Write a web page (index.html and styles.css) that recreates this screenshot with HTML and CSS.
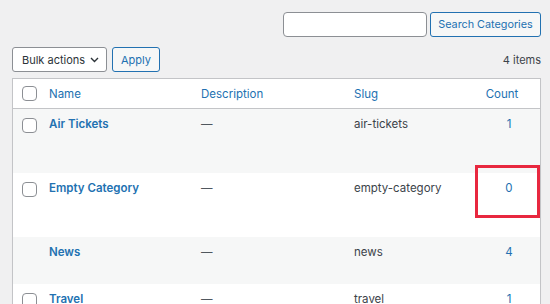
FILE: index.html
```html
<!DOCTYPE html>
<html lang="en">
<head>
    <meta charset="UTF-8">
    <meta name="viewport" content="width=device-width, initial-scale=1.0">
    <title>Categories</title>
    <link rel="stylesheet" href="styles.css">
</head>
<body>
    <div class="wrap">
        <form class="search-box" onsubmit="return false">
            <input type="search" class="search-input">
            <button class="button search-button">Search Categories</button>
        </form>

        <div class="tablenav">
            <div class="bulk-actions">
                <div class="select">
                    <span>Bulk actions</span>
                    <svg width="9" height="6" viewBox="0 0 9 6"><path d="M1 1l3.5 3.5L8 1" fill="none" stroke="#2c3338" stroke-width="1.4"/></svg>
                </div>
                <button class="button">Apply</button>
            </div>
            <span class="items-count">4 items</span>
        </div>

        <table class="terms">
            <colgroup>
                <col class="w-cb">
                <col class="w-name">
                <col class="w-desc">
                <col class="w-slug">
                <col>
            </colgroup>
            <thead>
                <tr>
                    <th class="col-cb"><span class="cb"></span></th>
                    <th>Name</th>
                    <th>Description</th>
                    <th>Slug</th>
                    <th class="col-count">Count</th>
                </tr>
            </thead>
            <tbody>
                <tr class="alt">
                    <td class="col-cb"><span class="cb"></span></td>
                    <td><a href="#" class="row-title">Air Tickets</a><div class="row-actions">Edit | Quick Edit | Delete | View</div></td>
                    <td class="dash">—</td>
                    <td>air-tickets</td>
                    <td class="col-count"><a href="#">1</a></td>
                </tr>
                <tr>
                    <td class="col-cb"><span class="cb"></span></td>
                    <td><a href="#" class="row-title">Empty Category</a><div class="row-actions">Edit | Quick Edit | Delete | View</div></td>
                    <td class="dash">—</td>
                    <td>empty-category</td>
                    <td class="col-count"><a href="#">0</a><span class="highlight"></span></td>
                </tr>
                <tr class="alt">
                    <td class="col-cb"></td>
                    <td><a href="#" class="row-title">News</a></td>
                    <td class="dash">—</td>
                    <td>news</td>
                    <td class="col-count"><a href="#">4</a></td>
                </tr>
                <tr>
                    <td class="col-cb"><span class="cb"></span></td>
                    <td><a href="#" class="row-title">Travel</a><div class="row-actions">Edit | Quick Edit | Delete | View</div></td>
                    <td class="dash">—</td>
                    <td>travel</td>
                    <td class="col-count"><a href="#">1</a></td>
                </tr>
            </tbody>
        </table>
    </div>
</body>
</html>
```

FILE: styles.css
```css
:root {
    --wp-blue: #2271b1;
    --wp-border: #c3c4c7;
    --wp-input: #8c8f94;
    --wp-text: #3c434a;
    --wp-bg: #f0f0f1;
    --wp-stripe: #f6f7f7;
}

body {
    margin: 0;
    background-color: var(--wp-bg);
    font-family: Inter, "Liberation Sans", Arial, sans-serif;
    font-size: 11px;
    color: var(--wp-text);
}

.wrap {
    padding: 12px 9px 0 12px;
}

.search-box {
    display: flex;
    justify-content: flex-end;
    gap: 3px;
    margin: 0;
}

.search-input {
    width: 144px;
    height: 25px;
    box-sizing: border-box;
    border: 1px solid var(--wp-input);
    border-radius: 4px;
    background: #fff;
    margin: 0;
}

.button {
    height: 25px;
    box-sizing: border-box;
    padding: 0 8px;
    border: 1px solid var(--wp-blue);
    border-radius: 3px;
    background: var(--wp-stripe);
    color: var(--wp-blue);
    font-family: inherit;
    font-size: 11px;
    cursor: pointer;
}

.search-button {
    width: 111px;
    padding: 0;
    font-size: 10.8px;
}

.tablenav {
    display: flex;
    justify-content: space-between;
    align-items: center;
    margin-top: 10px;
}

.bulk-actions {
    display: flex;
    gap: 5px;
}

.select {
    width: 95px;
    height: 25px;
    box-sizing: border-box;
    display: flex;
    align-items: center;
    justify-content: space-between;
    padding: 0 7px 0 9px;
    border: 1px solid var(--wp-input);
    border-radius: 3px;
    background: #fff;
    color: #2c3338;
    font-size: 11px;
}

.bulk-actions .button {
    width: 48px;
    padding: 0;
}

.items-count {
    font-size: 11px;
}

.terms {
    width: 100%;
    margin-top: 6px;
    table-layout: fixed;
    border-collapse: separate;
    border-spacing: 0;
    border: 1px solid var(--wp-border);
    background: #fff;
    box-shadow: 0 1px 1px rgba(0, 0, 0, 0.04);
}

.w-cb { width: 28px; }
.w-name { width: 152px; }
.w-desc { width: 153px; }
.w-slug { width: 124px; }

.terms th {
    height: 29px;
    padding: 0 8px;
    border-bottom: 1px solid var(--wp-border);
    text-align: left;
    font-weight: 400;
    font-size: 11.5px;
    color: var(--wp-blue);
    vertical-align: middle;
}

.terms td {
    padding: 7px 8px 24px;
    line-height: 16px;
    vertical-align: top;
    font-size: 11.5px;
}

.terms tr.alt td {
    background: var(--wp-stripe);
}

.terms .col-cb {
    padding: 0 0 0 9px;
}

.terms td.col-cb {
    padding-top: 9px;
}

.cb {
    display: block;
    width: 15px;
    height: 15px;
    box-sizing: border-box;
    border: 1px solid var(--wp-input);
    border-radius: 4px;
    background: #fff;
}

.row-title {
    font-weight: 600;
    font-size: 11.5px;
    color: var(--wp-blue);
    text-decoration: none;
}

.row-actions {
    height: 17px;
    visibility: hidden;
}

.dash {
    color: #50575e;
}

.terms .col-count {
    text-align: center;
    position: relative;
}

.terms th.col-count {
    padding: 0 6px 0 0;
}

.terms td.col-count {
    padding-left: 8px;
    padding-right: 0;
}

.col-count a {
    color: var(--wp-blue);
    text-decoration: none;
}

.highlight {
    position: absolute;
    top: -8px;
    left: 5px;
    right: 0;
    height: 53px;
    box-sizing: border-box;
    border: 3px solid #e8283f;
}
```
